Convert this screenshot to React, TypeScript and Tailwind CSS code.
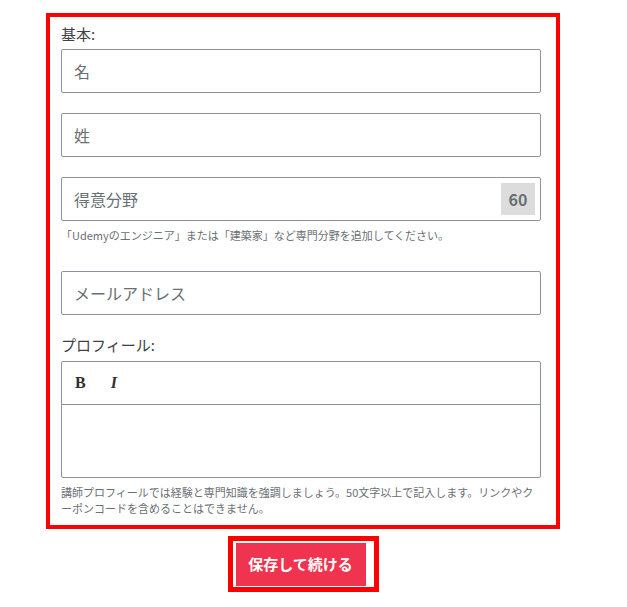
import React from "react";

const font = { fontFamily: '"Noto Sans CJK JP", "Noto Sans", sans-serif' };

function TextField({ placeholder, badge }: { placeholder: string; badge?: string }) {
  return (
    <div className="flex h-[44px] w-[480px] items-center rounded-[2px] border border-[#8a92a3] bg-white pl-[12px] pr-[5px]">
      <span className="flex-1 text-[16px] text-[#6a6f73]">{placeholder}</span>
      {badge && (
        <span className="flex h-[32px] w-[34px] items-center justify-center bg-[#dcdcdc] text-[16px] font-bold text-[#6a6f73]">
          {badge}
        </span>
      )}
    </div>
  );
}

export default function App() {
  return (
    <div className="min-h-[607px] bg-white text-[#1c1d1f]" style={font}>
      <div className="flex w-[514px] flex-col items-center pt-[13px] ml-[46px]">
        <div className="w-[514px] border-[4px] border-[#ff0000] pl-[11px] pt-[6px] pb-[9px]">
          <div className="mb-[4px] text-[15px] leading-[22px] text-[#3e4143]">基本:</div>
          <div className="flex flex-col gap-[20px]">
            <TextField placeholder="名" />
            <TextField placeholder="姓" />
            <TextField placeholder="得意分野" badge="60" />
          </div>
          <p className="mt-[6px] text-[11px] leading-[16px] text-[#6a6f73]">
            「Udemyのエンジニア」または「建築家」など専門分野を追加してください。
          </p>
          <div className="mt-[28px]">
            <TextField placeholder="メールアドレス" />
          </div>
          <div className="mt-[19px] mb-[5px] text-[15px] leading-[22px] text-[#3e4143]">プロフィール:</div>
          <div className="w-[480px] rounded-[2px] border border-[#8a92a3]">
            <div className="flex h-[43px] items-center gap-[25px] border-b border-[#8a92a3] pl-[13px]">
              <span className="text-[16px] font-bold text-[#2d2f31]" style={{ fontFamily: '"Liberation Serif", serif' }}>
                B
              </span>
              <span className="text-[16px] font-bold italic text-[#2d2f31]" style={{ fontFamily: '"Liberation Serif", serif' }}>
                I
              </span>
            </div>
            <div className="h-[72px]" />
          </div>
          <p className="mt-[6px] w-[480px] text-[11px] leading-[16px] text-[#6a6f73]">
            講師プロフィールでは経験と専門知識を強調しましょう。50文字以上で記入します。リンクやクーポンコードを含めることはできません。
          </p>
        </div>
        <div className="mt-[7px] border-[5px] border-[#ff0000] bg-white pl-[3px] pt-[2px] pr-[8px] pb-[1px]">
          <button className="flex h-[43px] w-[130px] items-center justify-center bg-[#f0334e] text-[15px] font-bold text-white">
            保存して続ける
          </button>
        </div>
      </div>
    </div>
  );
}
